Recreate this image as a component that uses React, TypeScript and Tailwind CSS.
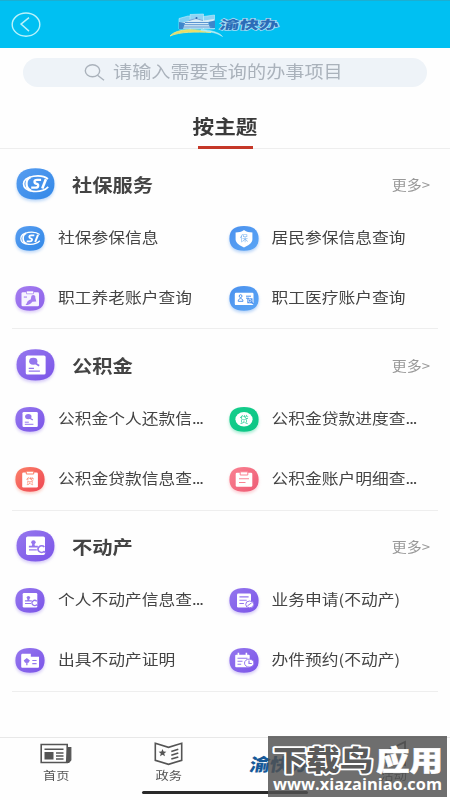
import React from "react";

type Kind = "si" | "shield" | "clip" | "card" | "doc" | "loanClip" | "loan" | "list" | "person" | "folder" | "apply" | "calendar";

const gradients: Record<string, [string, string]> = {
  blue: ["#579df0", "#3288e8"],
  sky: ["#4b91ee", "#5aa5f5"],
  violet: ["#a57df0", "#8c62ea"],
  purple: ["#9577ee", "#7b55e8"],
  orange: ["#fb8068", "#ee4653"],
  green: ["#17ce8c", "#0ac584"],
  pink: ["#fa8292", "#ed5a73"],
};

function Glyph({ kind, color }: { kind: Kind; color: string }) {
  const cjk = "'Noto Sans CJK SC', sans-serif";
  switch (kind) {
    case "si":
      return (
        <g fill="none" stroke="#fff">
          <path d="M24.6 8.6C19.5 4.4 6 5.8 5.8 12.4 5.8 19.4 19.5 20.2 24.8 14.8" strokeWidth="1.3" />
          <path d="M11.2 7.3C7 9 7 15.8 11.6 17.6" strokeWidth="1.7" />
          <path d="M19.3 9.3h-3.1c-2.6 0-2.4 2.7-.6 3 2.3.5 1.7 3-.5 3h-3.4" strokeWidth="1.8" />
          <path d="M23 8.8 20.2 16" strokeWidth="2" />
        </g>
      );
    case "shield":
      return (
        <g>
          <path d="M15 4c2.6 1.9 5.2 2.3 8.4 2.5v7c0 3.7-4.8 6.4-8.4 8-3.6-1.6-8.4-4.3-8.4-8v-7C9.8 6.3 12.4 5.9 15 4Z" fill="#fff" />
          <text x="15" y="15.4" textAnchor="middle" fontSize="8" fontFamily={cjk} fill="#7db5ef">保</text>
        </g>
      );
    case "clip":
      return (
        <g>
          <rect x="6.5" y="6.3" width="17.5" height="14" rx="1.3" fill="#fff" fillOpacity=".92" />
          <path d="M11.5 5h7v2.8h-7z" fill="#fff" stroke={color} strokeWidth=".7" />
          <path d="M16.5 9.8c1.6-1.8 4.6-.2 3.8 2l1 3.700-4 .2c-1.300 2.600-3.800 3.300-6.800 3.300 2.200-1.800.8-4.200 5.200-5.500Z" fill={color} />
          <path d="M8.800 10.200h3.200v1.800H8.800z" fill={color} fillOpacity=".6" />
        </g>
      );
    case "card":
      return (
        <g>
          <rect x="5.8" y="6.7" width="18.7" height="12.4" rx="1.2" fill="#fff" />
          <circle cx="11.6" cy="10.1" r="1.4" fill="none" stroke={color} />
          <path d="M9.2 15.3c0-3.6 4.8-3.6 4.8 0ZM17 10.2h5M17 12.2h3" fill="none" stroke={color} />
          <path d="M18.3 12.3h5.2v5h-5.2z" fill={color} />
          <circle cx="20.7" cy="14.6" r="1.4" fill="none" stroke="#fff" strokeWidth=".7" />
          <path d="m21.8 15.8 3 2.5" stroke={color} strokeWidth="1.3" />
        </g>
      );
    case "doc":
      return (
        <g>
          <rect x="7.5" y="5" width="15.3" height="15" rx="1.3" fill="#fff" />
          <ellipse cx="13.3" cy="9.6" rx="3.2" ry="2.7" fill={color} />
          <path d="m14.6 11 3.2 2" stroke={color} strokeWidth="1.4" />
          <path d="M9.8 15.2h4M9.8 17.3h8.6" stroke={color} strokeWidth="1" />
        </g>
      );
    case "loanClip":
      return (
        <g>
          <rect x="7.2" y="5.5" width="15.7" height="15" rx="1.3" fill="#fff" />
          <path d="M11.3 4.2h7.4v2.8h-7.4z" fill="#fff" stroke={color} strokeWidth="1" />
          <text x="15" y="16.6" textAnchor="middle" fontSize="8" fontFamily={cjk} fill={color}>贷</text>
        </g>
      );
    case "loan":
      return (
        <g>
          <ellipse cx="15" cy="12.3" rx="8.6" ry="7.2" fill="#fff" />
          <text x="15" y="15.8" textAnchor="middle" fontSize="9.2" fontFamily={cjk} fill={color}>贷</text>
        </g>
      );
    case "list":
      return (
        <g>
          <rect x="6.7" y="5.8" width="16.6" height="14" rx="1.3" fill="#fff" />
          <path d="M11.2 4.8h7.6V8h-7.6z" fill="#fff" stroke={color} strokeWidth="1" />
          <path d="M10 11.7h10M10 15.5h6.5" stroke={color} strokeWidth="1.1" />
        </g>
      );
    case "person":
      return (
        <g>
          <rect x="7.7" y="5" width="14.6" height="14.5" rx="1.3" fill="#fff" />
          <ellipse cx="13.4" cy="9.6" rx="1.7" ry="1.6" fill={color} />
          <path d="M12.7 10h1.4l.4 2.3h2.3v1.3h-6.9v-1.3h2.3ZM10 15h6v1h-6z" fill={color} />
          <path d="M21.8 13.3a2.8 2.5 0 1 0 0 3.3" fill="none" stroke={color} strokeWidth="1.3" />
          <path d="m21.4 16.6 1.6 1.6" stroke={color} strokeWidth="1.1" />
        </g>
      );
    case "folder":
      return (
        <g>
          <path d="M7.5 5.8h8.3v3H24v9.7c0 .7-.5 1.3-1.3 1.3H7.5c-.8 0-1.3-.6-1.3-1.3V7.1c0-.7.5-1.3 1.3-1.3Z" fill="#fff" />
          <path d="m8.7 12.4 3.1-2.5 3.1 2.5-1.4 2.4h-3.4ZM11.2 12.5h1.3v4.7h-1.3z" fill={color} />
          <path d="M17.3 12.5h4.3M17.3 15.6h4.3" stroke={color} strokeWidth="1.1" />
        </g>
      );
    case "apply":
      return (
        <g>
          <rect x="8" y="5.5" width="14" height="14" rx="1.3" fill="#fff" />
          <path d="M10.4 8.9h9.2M10.4 12.2h7.3M10.4 15.5h4.5" stroke={color} strokeWidth="1.1" />
          <ellipse cx="20.7" cy="16.4" rx="4" ry="3.4" fill="#fff" stroke={color} strokeWidth="1" />
          <path d="m18.5 17.8 4.2-3" stroke={color} strokeWidth="1" />
        </g>
      );
    case "calendar":
      return (
        <g>
          <rect x="6.2" y="6.7" width="14.5" height="12.5" rx="1" fill="#fff" />
          <path d="M9.4 4.8v3M17.4 4.8v3" stroke="#fff" strokeWidth="1.6" />
          <path d="M8.5 10.2h10M8.5 13.2h5M8.5 16.2h3.7" stroke={color} strokeWidth="1.1" />
          <ellipse cx="20.2" cy="15.1" rx="4.7" ry="4" fill="#fff" stroke={color} strokeWidth="1" />
          <path d="M20 12.5v3h2.8" fill="none" stroke={color} strokeWidth="1.2" />
        </g>
      );
  }
}

function Badge({ kind, tone, big }: { kind: Kind; tone: string; big?: boolean }) {
  const [from, to] = gradients[tone];
  const id = `${kind}-${tone}-${big ? "l" : "s"}`;
  return (
    <svg
      viewBox="0 0 30 25"
      preserveAspectRatio="none"
      className={big ? "h-8 w-[39px] shrink-0 overflow-visible" : "h-[25px] w-[30px] shrink-0 overflow-visible"}
      style={{ filter: `drop-shadow(0 2px 1.5px ${from}60)` }}
    >
      <defs>
        <linearGradient id={id} x1="0" y1="0" x2="1" y2="1">
          <stop stopColor={from} />
          <stop offset="1" stopColor={to} />
        </linearGradient>
      </defs>
      <path d="M15 .1C24.6.1 29.6 4.3 29.6 12.4S24.600 24.700 15 24.700.4 20.500.4 12.400 5.400.1 15 .1Z" fill={`url(#${id})`} />
      <Glyph kind={kind} color={tone === "green" ? "#2bce96" : from} />
    </svg>
  );
}

type Item = [Kind, string, string];
const sections: { title: string; kind: Kind; tone: string; size: string; items: Item[] }[] = [
  {
    title: "社保服务", kind: "si", tone: "blue", size: "h-[180px]",
    items: [["si", "blue", "社保参保信息"], ["shield", "sky", "居民参保信息查询"], ["clip", "violet", "职工养老账户查询"], ["card", "sky", "职工医疗账户查询"]],
  },
  {
    title: "公积金", kind: "doc", tone: "purple", size: "h-[182px] pt-px",
    items: [["doc", "purple", "公积金个人还款信..."], ["loan", "green", "公积金贷款进度查..."], ["loanClip", "orange", "公积金贷款信息查..."], ["list", "pink", "公积金账户明细查..."]],
  },
  {
    title: "不动产", kind: "person", tone: "purple", size: "h-[181px]",
    items: [["person", "purple", "个人不动产信息查..."], ["apply", "purple", "业务申请(不动产)"], ["folder", "purple", "出具不动产证明"], ["calendar", "purple", "办件预约(不动产)"]],
  },
];

function Label({ text }: { text: string }) {
  const cut = text.endsWith("...");
  return (
    <span className="-mt-px ml-[13px] scale-y-[.86] text-[16.75px] leading-none whitespace-nowrap">
      {cut ? text.slice(0, -3) : text}
      {cut && <span className="tracking-[-1px]">...</span>}
    </span>
  );
}

function Logo() {
  return (
    <svg className="h-9 w-[120px] overflow-visible" viewBox="0 0 120 36">
      <path d="M14 11.5 23 9l3 .5V22H14Z" fill="#7dcff4" stroke="#c5eefa" strokeWidth=".6" />
      <path d="M25 7.5 38.5 7v15H25ZM38.5 9.5 49.5 8v14h-11Z" fill="#8fd3f4" stroke="#c5eefa" strokeWidth=".6" />
      <path d="m15 16 9-2 7-3 8 2.5 10-1.5-1 9H15Z" fill="#d9edf7" />
      <path d="m14 15 6 1-2 6h-4ZM43 15l7-1.5V21h-5Z" fill="#3d86cb" />
      <path d="M20 15.5h23M18.5 17.7h26M17.5 20h29" stroke="#5b94d0" strokeWidth="1" />
      <path d="m24 13.5 7-2 7 2" fill="none" stroke="#7aa9da" strokeWidth="1.1" />
      <circle cx="31.5" cy="11" r="1" fill="#2c66ae" />
      <path d="M5 29c7-8 26-7.500 41-3.500C31 24.800 15 24.500 5 29Z" fill="#e9dc60" stroke="#eee581" strokeWidth=".9" />
      <path d="M36 22.500c9 .5 18 2.500 21.500 7-6-4-12-4.500-21.500-6Z" fill="#b9ecf4" stroke="#b9ecf4" strokeWidth=".6" />
      <text x="58" y="22.500" textLength="59" lengthAdjust="spacingAndGlyphs" transform="skewX(-10)" fontFamily="'Noto Sans CJK SC', sans-serif" fontSize="12" fontWeight="900" fill="#2b6cb8" stroke="#a6dcf5" strokeWidth="1.4" paintOrder="stroke">渝快办</text>
    </svg>
  );
}

export default function App() {
  return (
    <div className="relative flex h-[800px] w-[450px] flex-col overflow-hidden bg-[#fefefe] font-['Noto_Sans_CJK_SC',sans-serif] text-[#444]">
      <header className="grid h-12 shrink-0 grid-cols-[1fr_120px_1fr] items-center border-t border-[#1caed1] bg-[#00c0f2]">
        <svg className="ml-[11px] h-[26px] w-[30px]" viewBox="0 0 30 26" fill="none" stroke="#b9f2fb">
          <ellipse cx="15" cy="12.6" rx="13.8" ry="11.6" strokeWidth="1.4" />
          <path d="m18 5.6-8 6.500 8 7" strokeWidth="1.4" />
        </svg>
        <Logo />
      </header>

      <div className="mx-[23px] mt-[10px] flex h-[29px] shrink-0 items-center rounded-full bg-[#eef3f8] pl-[61px] text-[#aab2bb]">
        <svg className="h-[18px] w-[21px]" viewBox="0 0 21 18" fill="none" stroke="currentColor" strokeWidth="1.4">
          <ellipse cx="8.5" cy="6.7" rx="7.2" ry="6" />
          <path d="m13.500 11.200 6.500 5" />
        </svg>
        <span className="-mt-[2px] ml-2 scale-y-[.87] text-[19.15px] leading-none whitespace-nowrap">请输入需要查询的办事项目</span>
      </div>

      <div className="flex h-[62px] shrink-0 flex-col items-center justify-end border-b border-[#eeeeee]">
        <h1 className="mb-[7px] scale-y-[.87] text-[21.6px] leading-[26px] font-bold text-[#3b3b3b]">按主题</h1>
        <div className="-mb-px h-[3px] w-[55px] bg-[#c53728]" />
      </div>

      <main className="shrink-0">
        {sections.map((s) => (
          <section key={s.title} className={`${s.size} mx-3 border-b border-[#eeeeee]`}>
            <div className="flex h-[59px] items-center pt-[10px] pl-1">
              <Badge kind={s.kind} tone={s.tone} big />
              <h2 className="mt-[2px] ml-[17px] flex-1 scale-y-[.87] text-[20.3px] leading-none font-bold">{s.title}</h2>
              <span className="mt-px mr-2 scale-y-[.9] text-[15px] leading-none text-[#999]">更多&gt;</span>
            </div>
            <div className="grid grid-cols-[213.500px_1fr]">
              {s.items.map(([kind, tone, label]) => (
                <div key={label} className="flex h-[60px] items-center pl-[3px]">
                  <Badge kind={kind} tone={tone} />
                  <Label text={label} />
                </div>
              ))}
            </div>
          </section>
        ))}
      </main>

      <nav className="mt-auto grid h-[63px] shrink-0 grid-cols-4 border-t border-[#e8e8e8] bg-[#fefefe] text-[#555]">
        <div className="flex flex-col items-center pt-[5px]">
          <svg className="h-[21px] w-8" viewBox="0 0 32 21" fill="none" stroke="currentColor">
            <path d="M1.200 1.500h26v18h-26z" strokeWidth="1.6" />
            <path d="M27.200 4.500h3.600V17l-2 2.500h-3" fill="currentColor" strokeWidth="1.2" />
            <path d="M4.500 6.300h19M16 10h7.500M16 13h7.500M16 16h7.500" strokeWidth="1.4" />
            <path d="M4.500 9h9v7.500h-9z" fill="currentColor" stroke="none" />
          </svg>
          <span className="mt-1 scale-y-[.87] text-[13.2px] leading-4">首页</span>
        </div>
        <div className="flex flex-col items-center pt-[4px]">
          <svg className="h-6 w-[29px]" viewBox="0 0 29 24" fill="none" stroke="currentColor" strokeWidth="1.6">
            <path d="m1.300 1.300 13.200 4 13.200-4v17l-13.200 4-13.200-4Z" />
            <path d="m8.500 7 1.100 2.500 2.800.2-2.200 1.800.8 2.800-2.500-1.500-2.500 1.500.8-2.800-2.200-1.800 2.800-.2Z" fill="currentColor" stroke="none" />
            <path d="m17.300 9.500 7-2.200m-7 6 7-2.200m-7 6 7-2.200" />
          </svg>
          <span className="mt-[2px] scale-y-[.87] text-[13.2px] leading-4">政务</span>
        </div>
        <svg className="mt-[14px] ml-[22px] h-6 w-[72px] overflow-visible" viewBox="0 0 72 24">
          <text x="5" y="18.500" transform="skewX(-10)" textLength="60" lengthAdjust="spacingAndGlyphs" fontFamily="'Noto Sans CJK SC', sans-serif" fontSize="17.500" fontWeight="900" fill="#165998">渝快办</text>
        </svg>
        <div className="flex flex-col items-center pt-[2px]">
          <svg className="h-7 w-8" viewBox="0 0 32 28" fill="none" stroke="currentColor" strokeWidth="1.8">
            <path d="M3 11v9h5l19 5V2L8 11H3m5 0v9m1 0v5h6v-3" />
          </svg>
          <span className="scale-y-[.87] text-[13.2px] leading-4">活动</span>
        </div>
      </nav>

      <div className="absolute top-[791px] left-[142px] h-[3px] w-[166px] rounded-full bg-[#292929]" />
      <svg className="absolute top-[736px] left-[268px] h-[61px] w-[179px]" viewBox="0 0 179 61">
        <path d="M0 0h179v61H0z" fill="#505050" fillOpacity=".83" />
        <g fontFamily="'Noto Sans CJK SC', sans-serif" fontWeight="900" fontSize="28">
          <text x="5" y="34.500" textLength="100" lengthAdjust="spacingAndGlyphs" fill="#5a5a5a" stroke="#fff" strokeWidth="3.6" strokeLinejoin="round" style={{ paintOrder: "stroke" }}>下载鸟</text>
          <text x="108" y="34.500" textLength="67" lengthAdjust="spacingAndGlyphs" fill="#fff" stroke="#fff" strokeWidth=".5">应用</text>
        </g>
        <text x="5" y="54" textLength="169" lengthAdjust="spacingAndGlyphs" fontFamily="'Open Sans', sans-serif" fontWeight="700" fontSize="16.5" fill="#fff">www.xiazainiao.com</text>
      </svg>
    </div>
  );
}
